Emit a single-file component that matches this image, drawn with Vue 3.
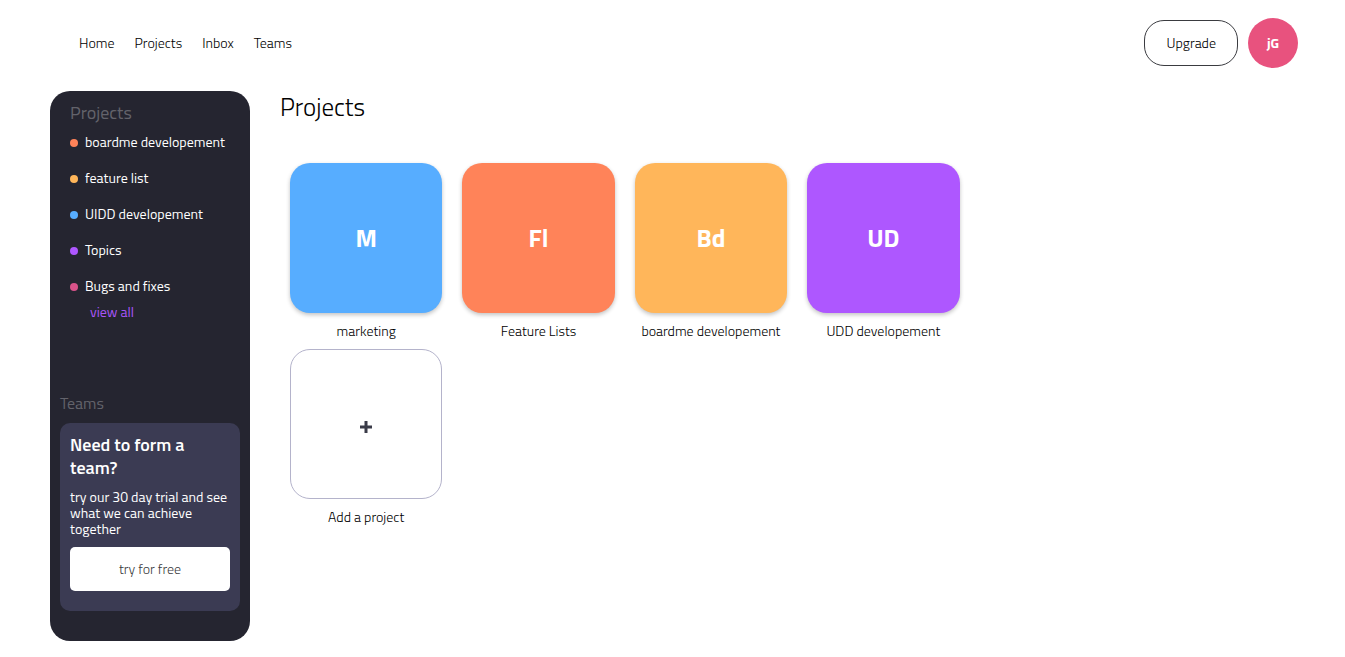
<script setup>
const links = ['Home', 'Projects', 'Inbox', 'Teams']

const recent = [
  { name: 'boardme developement', tone: 'coral' },
  { name: 'feature list', tone: 'amber' },
  { name: 'UIDD developement', tone: 'blue' },
  { name: 'Topics', tone: 'violet' },
  { name: 'Bugs and fixes', tone: 'pink' }
]

const projects = [
  { initials: 'M', name: 'marketing', tone: 'blue' },
  { initials: 'Fl', name: 'Feature Lists', tone: 'coral' },
  { initials: 'Bd', name: 'boardme developement', tone: 'amber' },
  { initials: 'UD', name: 'UDD developement', tone: 'violet' }
]
</script>

<template>
  <div class="page">
    <header class="topbar">
      <nav class="nav">
        <a v-for="link in links" :key="link" href="#">{{ link }}</a>
      </nav>
      <div class="account">
        <button class="upgrade" type="button">Upgrade</button>
        <button class="avatar" type="button">jG</button>
      </div>
    </header>

    <div class="body">
      <aside class="sidebar">
        <section class="recent">
          <h2>Projects</h2>
          <ul>
            <li v-for="item in recent" :key="item.name">
              <span class="dot" :class="item.tone"></span>
              <a href="#">{{ item.name }}</a>
            </li>
          </ul>
          <a class="view-all" href="#">view all</a>
        </section>

        <section class="teams">
          <h2>Teams</h2>
          <div class="promo">
            <h3>Need to form a team?</h3>
            <p>try our 30 day trial and see what we can achieve together</p>
            <button type="button">try for free</button>
          </div>
        </section>
      </aside>

      <main class="main">
        <h1>Projects</h1>
        <div class="grid">
          <div v-for="project in projects" :key="project.name" class="cell">
            <button class="tile" :class="project.tone" type="button" :aria-labelledby="'p-' + project.initials">
              {{ project.initials }}
            </button>
            <span :id="'p-' + project.initials" class="caption">{{ project.name }}</span>
          </div>
          <div class="cell">
            <button class="tile add" type="button" aria-labelledby="p-add">
              <svg viewBox="0 0 12 12" width="12" height="12" aria-hidden="true">
                <path d="M6 0V12M0 6H12" stroke="currentColor" stroke-width="3" />
              </svg>
            </button>
            <span id="p-add" class="caption">Add a project</span>
          </div>
        </div>
      </main>
    </div>
  </div>
</template>

<style>
body {
  margin: 0;
  background: #fff;
}
</style>

<style scoped>
.page {
  font-family: "Titillium Web", Roboto, "Open Sans", sans-serif;
  font-size: 14px;
  line-height: 16px;
  color: #000;
}

h1,
h2,
h3,
p,
ul {
  margin: 0;
  padding: 0;
}

a {
  color: inherit;
  text-decoration: none;
}

button {
  box-sizing: border-box;
  padding: 0;
  border: 0;
  font: inherit;
  cursor: pointer;
}

.topbar {
  display: flex;
  justify-content: space-between;
  align-items: center;
  padding: 18px 47px 0 79px;
}

.nav {
  display: flex;
  gap: 20px;
  font-weight: 300;
}

.account {
  display: flex;
  align-items: center;
  gap: 10px;
}

.upgrade {
  height: 46px;
  padding: 0 21px;
  border: 1px solid #3a3b40;
  border-radius: 20px;
  background: #fff;
  color: #000;
  font-weight: 300;
}

.avatar {
  width: 50px;
  height: 50px;
  border-radius: 50%;
  background: #e8527e;
  color: #fff;
  font-weight: 700;
}

.body {
  display: flex;
  align-items: flex-start;
  gap: 30px;
  padding: 23px 51px 16px 50px;
}

.sidebar {
  box-sizing: border-box;
  flex: 0 0 200px;
  padding: 10px 10px 30px;
  border-radius: 20px;
  background: #252530;
  color: #fff;
}

.recent {
  padding: 0 10px;
}

.recent h2 {
  font-size: 18px;
  line-height: 24px;
  font-weight: 400;
  color: #63636b;
}

.recent ul {
  list-style: none;
  display: flex;
  flex-direction: column;
  gap: 20px;
  padding: 9px 0 10px;
}

.recent li {
  display: flex;
  align-items: center;
  gap: 7px;
  white-space: nowrap;
}

.dot {
  flex: none;
  width: 8px;
  height: 8px;
  margin-top: 2px;
  border-radius: 50%;
}

.view-all {
  display: block;
  padding-left: 20px;
  color: #a855f7;
}

.teams {
  padding-top: 71px;
}

.teams h2 {
  font-size: 16px;
  line-height: 24px;
  font-weight: 400;
  color: #63636b;
}

.promo {
  margin-top: 8px;
  padding: 10px 10px 20px;
  border-radius: 10px;
  background: #3b3b53;
}

.promo h3 {
  font-size: 18px;
  line-height: 23px;
  font-weight: 600;
}

.promo p {
  margin: 10px 0;
}

.promo button {
  width: 100%;
  height: 44px;
  border-radius: 5px;
  background: #fff;
  color: #3a3b40;
  font-weight: 300;
}

.main {
  flex: 1;
  min-width: 0;
}

.main h1 {
  font-size: 25px;
  line-height: 32px;
  font-weight: 300;
}

.grid {
  display: grid;
  grid-template-columns: repeat(4, 1fr);
  row-gap: 10px;
  width: 68%;
  padding-top: 40px;
}

.cell {
  display: flex;
  flex-direction: column;
  gap: 10px;
  padding: 0 10px;
  text-align: center;
  font-weight: 300;
  white-space: nowrap;
}

.tile {
  display: flex;
  align-items: center;
  justify-content: center;
  height: 150px;
  border-radius: 20px;
  box-shadow: 0 2px 4px rgba(0, 0, 0, 0.24);
  color: #fff;
  font-size: 25px;
  line-height: 32px;
  font-weight: 700;
}

.tile.add {
  padding-top: 6px;
  border: 1px solid #b4b3cb;
  background: #fff;
  box-shadow: none;
  color: #3a3b48;
}

.blue {
  background: #57adff;
}

.coral {
  background: #ff8359;
}

.amber {
  background: #ffb65a;
}

.violet {
  background: #ae57ff;
}

.pink {
  background: #d9538a;
}
</style>
